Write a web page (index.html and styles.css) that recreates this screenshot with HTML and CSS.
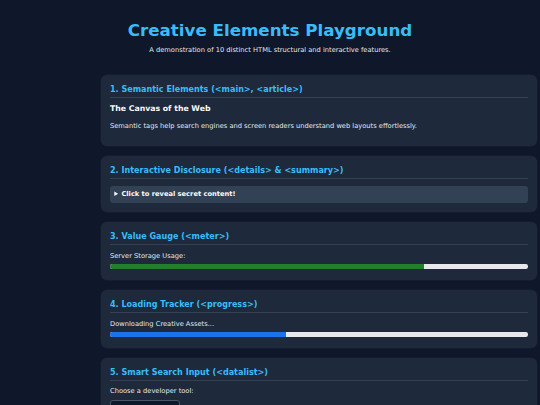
FILE: index.html
```html
<!DOCTYPE html>
<html lang="en">
<head>
<meta charset="utf-8">
<title>Creative Elements Playground</title>
<link rel="stylesheet" href="styles.css">
</head>
<body>
<header class="hero">
  <h1 class="title">Creative Elements Playground</h1>
  <p class="subtitle">A demonstration of 10 distinct HTML structural and interactive features.</p>
</header>
<main class="cards">
  <section class="card">
    <h2 class="card-title">1. Semantic Elements (&lt;main&gt;, &lt;article&gt;)</h2>
    <article>
      <h3 class="article-title">The Canvas of the Web</h3>
      <p class="card-text">Semantic tags help search engines and screen readers understand web layouts effortlessly.</p>
    </article>
  </section>
  <section class="card">
    <h2 class="card-title">2. Interactive Disclosure (&lt;details&gt; &amp; &lt;summary&gt;)</h2>
    <details class="reveal">
      <summary class="reveal-summary">Click to reveal secret content!</summary>
      <p class="card-text">You found the hidden message.</p>
    </details>
  </section>
  <section class="card">
    <h2 class="card-title">3. Value Gauge (&lt;meter&gt;)</h2>
    <span class="field-label">Server Storage Usage:</span>
    <div class="bar" role="meter" aria-valuenow="0.75" aria-valuemin="0" aria-valuemax="1">
      <div class="bar-fill bar-fill--meter" style="width:75%"></div>
    </div>
  </section>
  <section class="card">
    <h2 class="card-title">4. Loading Tracker (&lt;progress&gt;)</h2>
    <span class="field-label">Downloading Creative Assets...</span>
    <div class="bar" role="progressbar" aria-valuenow="42" aria-valuemin="0" aria-valuemax="100">
      <div class="bar-fill bar-fill--progress" style="width:42%"></div>
    </div>
  </section>
  <section class="card">
    <h2 class="card-title">5. Smart Search Input (&lt;datalist&gt;)</h2>
    <label class="field-label" for="tool">Choose a developer tool:</label>
    <input class="tool-input" id="tool" list="tools" placeholder="Start typing...">
    <datalist id="tools">
      <option value="VS Code"></option>
      <option value="Git"></option>
      <option value="Chrome DevTools"></option>
    </datalist>
  </section>
</main>
</body>
</html>
```
FILE: styles.css
```css
* {
  box-sizing: border-box;
}

body {
  margin: 0;
  background: #0f172a;
  color: #e2e8f0;
  font-family: "DejaVu Sans", Verdana, sans-serif;
  font-size: 6.7px;
}

.hero {
  text-align: center;
  padding-top: 20px;
}

.title {
  margin: 0;
  font-size: 16.7px;
  color: #38bdf8;
}

.subtitle {
  margin: 6.4px 0 0;
  color: #e5e7eb;
  font-size: 6.7px;
}

.cards {
  display: flex;
  flex-direction: column;
  gap: 10.4px;
  margin: 20.4px 3px 20px 101px;
}

.card {
  background: #1e293b;
  border-radius: 6px;
  padding: 10px 9px 9px;
  box-shadow: 0 0 0 0.5px rgba(148, 163, 184, 0.08);
}

.card-title {
  margin: 0 0 6.5px;
  padding-bottom: 3px;
  font-size: 8.05px;
  color: #38bdf8;
  border-bottom: 1px solid #334155;
}

.article-title {
  margin: 1.4px 0 8.8px;
  font-size: 7.75px;
  color: #f8fafc;
}

.card-text {
  margin: 0 0 6.67px;
}

.reveal-summary {
  background: #334155;
  border-radius: 3px;
  padding: 4.6px 4.3px;
  font-weight: bold;
  color: #f8fafc;
  cursor: pointer;
}

.field-label {
  display: block;
}

.bar {
  height: 4.4px;
  margin: 4.6px 0 2px;
  background: #e8e8ec;
  border-radius: 2.2px;
  overflow: hidden;
}

.bar-fill {
  height: 100%;
}

.bar-fill--meter {
  background: #22802a;
}

.bar-fill--progress {
  background: #1a73e8;
}

.tool-input {
  display: block;
  margin-top: 4.1px;
  width: 70px;
  padding: 3px 4px;
  font-family: inherit;
  font-size: 6.7px;
  color: #e2e8f0;
  background: #0f172a;
  border: 1px solid #475569;
  border-radius: 3px;
}

.tool-input::placeholder {
  color: #94a3b8;
}
```
